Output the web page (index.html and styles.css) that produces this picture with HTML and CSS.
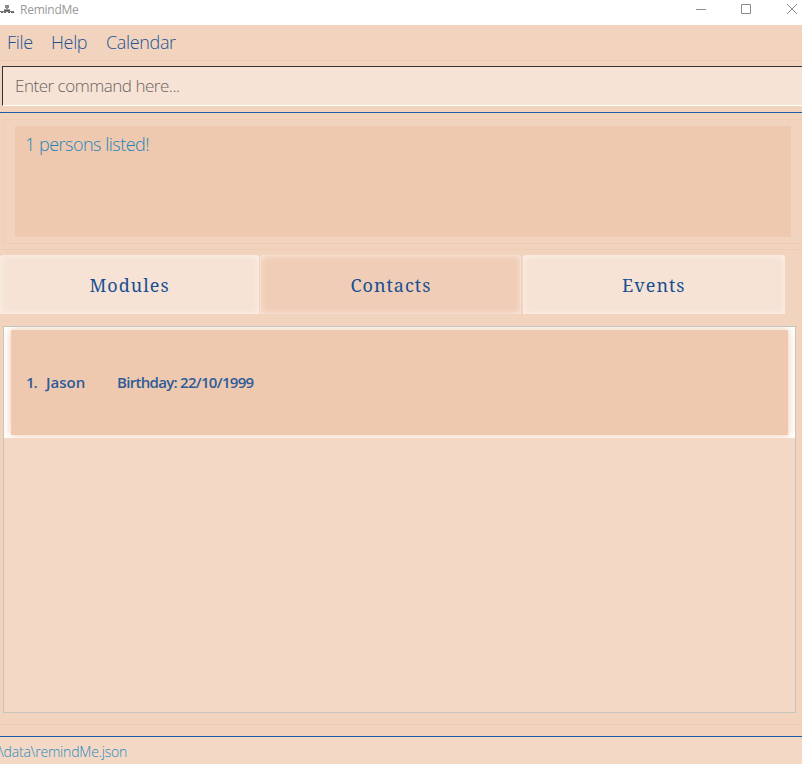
FILE: index.html
```html
<!DOCTYPE html>
<html lang="en">
<head>
<meta charset="utf-8">
<title>RemindMe</title>
<link rel="stylesheet" href="styles.css">
</head>
<body>
<div class="window">
  <header class="titlebar">
    <svg class="app-icon" width="15" height="14" viewBox="0 0 15 14">
      <path d="M5 2h4v3H5z" fill="#8a8a8a"/>
      <path d="M6 5h2v2H6zM4 6h6v1H4z" fill="#999"/>
      <path d="M0 8h14v1H0z" fill="#777"/>
      <path d="M4 7h6v1H4zM1 9h2v1H1zM4 9h2v1H4zM8 9h2v1H8zM11 9h3v1h-3z" fill="#606060"/>
    </svg>
    <span class="app-name">RemindMe</span>
    <svg class="controls" width="102" height="10" viewBox="0 0 102 10" fill="none" stroke="#8c8c8c">
      <path d="M0 5.500h10M45.500.5h9v9h-9z"/>
      <path d="M91 0l10 10M101 0L91 10"/>
    </svg>
  </header>
  <nav class="menu"><span class="m-file">File</span><span class="m-help">Help</span><span>Calendar</span></nav>
  <div class="command"><span>Enter command here...</span></div>
  <section class="result-area">
    <div class="result-frame"><div class="result"><span>1 persons listed!</span></div></div>
  </section>
  <div class="tabs">
    <div class="tab"><span>Modules</span></div>
    <div class="tab active"><span>Contacts</span></div>
    <div class="tab"><span>Events</span></div>
  </div>
  <main class="list">
    <div class="row">
      <div class="card"><span class="num">1.</span><span class="name">Jason</span><span class="bday">Birthday: 22/10/1999</span></div>
    </div>
  </main>
  <div class="spacer"></div>
  <footer class="status"><span>\data\remindMe.json</span></footer>
</div>
</body>
</html>
```
FILE: styles.css
```css
* { box-sizing: border-box; }
body { margin: 0; }
.window {
  width: 802px;
  height: 764px;
  overflow: hidden;
  display: flex;
  flex-direction: column;
  background: #f2d3be;
  font-family: "Open Sans", "Noto Sans", sans-serif;
  font-weight: 300;
  white-space: nowrap;
}
.window > * { flex-shrink: 0; }
.titlebar {
  height: 25px;
  background: #fff;
  display: flex;
  align-items: flex-start;
}
.app-icon { margin-top: 3px; }
.app-name {
  margin-left: 5px;
  font-size: 12px;
  line-height: 19px;
  letter-spacing: -.25px;
  font-weight: 400;
  color: #999;
}
.controls { margin: 4px 4px 0 auto; }
.menu {
  height: 36px;
  border-bottom: 1px solid #efccb5;
  display: flex;
  font-size: 18px;
  line-height: 35px;
  letter-spacing: -.35px;
  color: #1d5395;
}
.m-file { width: 44px; margin-left: 7px; }
.m-help { width: 55px; }
.command {
  height: 40px;
  margin: 5px 0 6px 2px;
  padding-left: 12px;
  border-top: 1px solid #333;
  border-left: 1px solid #333;
  border-bottom: 1px solid #fff;
  background: #f6e3d6;
  font-size: 17px;
  line-height: 38px;
  letter-spacing: -.48px;
  color: #6b625f;
}
.result-area {
  height: 138px;
  border-top: 1px solid #1d5ba3;
  border-bottom: 1px solid #efccb5;
  padding: 6px 0 0 3px;
}
.result-frame {
  height: 125px;
  border: 1px solid #efccb5;
  border-right: 0;
  padding: 6px 11px 6px 11px;
}
.result {
  height: 111px;
  padding-left: 10px;
  background: #eec9af;
  font-size: 18px;
  line-height: 37px;
  letter-spacing: -.5px;
  color: #1f86ba;
}
.tabs {
  height: 59px;
  margin-top: 5px;
  width: 785px;
  display: grid;
  grid-template-columns: 259px 261px 262px;
  grid-template-rows: 59px;
  column-gap: 1.4px;
}
.tab {
  background: #f6e3d6;
  border-radius: 3px 3px 0 0;
  box-shadow: inset 0 0 6px rgba(255, 248, 243, .8);
  text-align: center;
  font-family: "Noto Serif", "DejaVu Serif", serif;
  font-weight: 400;
  font-size: 18px;
  line-height: 61px;
  letter-spacing: 1px;
  color: #174f93;
}
.active { background: #f0cdb7; }
.list {
  width: 793px;
  height: 387px;
  margin: 12px 0 0 3px;
  border: 1px solid #c6c4c1;
  background: #f3d8c6;
}
.row {
  height: 111px;
  padding: 3px 7px;
  background: #fffdfb;
  overflow: hidden;
}
.card {
  height: 105px;
  padding: 0 0 2px 15px;
  display: flex;
  align-items: center;
  background: #eec9af;
  box-shadow: 0 0 8px #eec9af;
  font-size: 15px;
  font-weight: 600;
  color: #2d5c98;
}
.num { width: 20px; letter-spacing: -1px; }
.name { width: 71px; }
.bday { letter-spacing: -.7px; }
.spacer { height: 12px; border-bottom: 1px solid #efccb5; }
.status {
  height: 28px;
  margin-top: 11px;
  text-indent: -1px;
  border-top: 1px solid #1d5ba3;
  background: #f3d8c6;
  font-size: 14px;
  line-height: 30px;
  letter-spacing: -.2px;
  color: #2a8abb;
}
```
